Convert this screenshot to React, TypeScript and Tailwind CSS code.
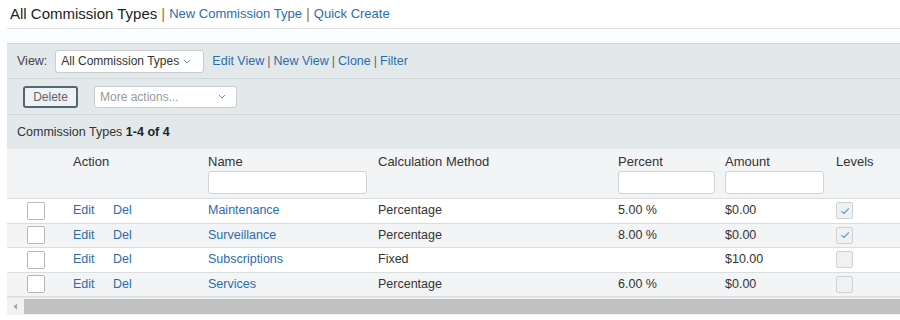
import React from "react";

const Chevron = () => (
  <svg width="8" height="5" viewBox="0 0 8 5" className="shrink-0">
    <path d="M1 1 L4 4 L7 1" fill="none" stroke="#8a8a8a" strokeWidth="1" />
  </svg>
);

const Check = () => (
  <svg width="10" height="8" viewBox="0 0 10 8">
    <path d="M1.5 4.2 L4 6.5 L8.8 1.5" fill="none" stroke="#5b9bd5" strokeWidth="1.1" />
  </svg>
);

type Row = { name: string; method: string; percent: string; amount: string; levels: boolean; shaded: boolean };

const rows: Row[] = [
  { name: "Maintenance", method: "Percentage", percent: "5.00 %", amount: "$0.00", levels: true, shaded: false },
  { name: "Surveillance", method: "Percentage", percent: "8.00 %", amount: "$0.00", levels: true, shaded: true },
  { name: "Subscriptions", method: "Fixed", percent: "", amount: "$10.00", levels: false, shaded: false },
  { name: "Services", method: "Percentage", percent: "6.00 %", amount: "$0.00", levels: false, shaded: true },
];

const cols = "grid grid-cols-[66px_135px_170px_240px_107px_111px_1fr]";

export default function App() {
  return (
    <div className="w-[900px] h-[320px] bg-white overflow-hidden text-[12.5px] text-[#333]" style={{ fontFamily: '"Liberation Sans", Arial, sans-serif' }}>
      {/* Title */}
      <div className="h-[29px] ml-[7px] border-b border-[#dcdedf] flex items-center pb-[2px] text-[15px] leading-none">
        <span className="ml-[3px] text-[#222]">All Commission Types</span>
        <span className="mx-[4px] text-[#a07a2c]">|</span>
        <span className="text-[#2a6cb0] text-[13px]">New Commission Type</span>
        <span className="mx-[4px] text-[#a07a2c]">|</span>
        <span className="text-[#2a6cb0] text-[13px]">Quick Create</span>
      </div>
      <div className="h-[14px] bg-[#fbfdfe]" />

      {/* Panel */}
      <div className="ml-[7px] bg-[#e3e9eb] border-t border-[#d2d8da]">
        {/* View row */}
        <div className="h-[35px] border-b border-[#d0d6d8] flex items-center pl-[10px]">
          <span className="text-[#444]">View:</span>
          <div className="ml-[8px] w-[149px] h-[23px] bg-white border border-[#c9cdcf] rounded-[3px] flex items-center justify-between pl-[5px] pr-[12px]">
            <span className="text-[12px] text-[#333]">All Commission Types</span>
            <Chevron />
          </div>
          <div className="ml-[8px] flex items-center text-[#2a6cb0]">
            <span>Edit View</span>
            <span className="mx-[3px] text-[#666]">|</span>
            <span>New View</span>
            <span className="mx-[3px] text-[#666]">|</span>
            <span>Clone</span>
            <span className="mx-[3px] text-[#666]">|</span>
            <span>Filter</span>
          </div>
        </div>

        {/* Actions row */}
        <div className="h-[36px] border-b border-[#d0d6d8] flex items-center pl-[16px]">
          <div className="w-[55px] h-[22px] border-2 border-[#4f6873] rounded-[3px] bg-[#eef2f3] flex items-center justify-center text-[12px] text-[#666]">
            Delete
          </div>
          <div className="ml-[16px] w-[143px] h-[22px] bg-white border border-[#c9cdcf] rounded-[3px] flex items-center justify-between pl-[5px] pr-[10px]">
            <span className="text-[12px] text-[#999]">More actions...</span>
            <Chevron />
          </div>
        </div>

        {/* Count row */}
        <div className="h-[34px] flex items-center pl-[10px] text-[#333]">
          Commission Types&nbsp;<span className="text-[#222]" style={{ fontWeight: 600 }}>1-4 of 4</span>
        </div>

        {/* Table header */}
        <div className={`${cols} h-[50px] bg-[#f2f4f5] border-b border-[#d8dcdd] text-[13px]`}>
          <div />
          <div className="pt-[5px] leading-[15px] text-[#333]">Action</div>
          <div className="pt-[5px] flex flex-col gap-[2px]">
            <span className="leading-[15px]">Name</span>
            <div className="w-[159px] h-[23px] bg-white border border-[#cfd3d5] rounded-[3px]" />
          </div>
          <div className="pt-[5px] leading-[15px]">Calculation Method</div>
          <div className="pt-[5px] flex flex-col gap-[2px]">
            <span className="leading-[15px]">Percent</span>
            <div className="w-[97px] h-[23px] bg-white border border-[#cfd3d5] rounded-[3px]" />
          </div>
          <div className="pt-[5px] flex flex-col gap-[2px]">
            <span className="leading-[15px]">Amount</span>
            <div className="w-[99px] h-[23px] bg-white border border-[#cfd3d5] rounded-[3px]" />
          </div>
          <div className="pt-[5px] leading-[15px]">Levels</div>
        </div>

        {/* Rows */}
        {rows.map((r) => (
          <div
            key={r.name}
            className={`${cols} h-[24.5px] items-center border-b border-[#dadedf] ${r.shaded ? "bg-[#f2f4f5]" : "bg-white"}`}
          >
            <div className="pl-[20px]">
              <div className="w-[18px] h-[18px] bg-white border border-[#b8b8b8] rounded-[2px]" />
            </div>
            <div className="flex text-[#2a6cb0]">
              <span className="w-[40px]">Edit</span>
              <span>Del</span>
            </div>
            <div className="text-[#2a6cb0]">{r.name}</div>
            <div>{r.method}</div>
            <div>{r.percent}</div>
            <div>{r.amount}</div>
            <div>
              <div className="w-[17px] h-[17px] bg-[#f0f1f2] border border-[#cfd2d4] rounded-[2px] flex items-center justify-center">
                {r.levels && <Check />}
              </div>
            </div>
          </div>
        ))}

        {/* Scrollbar */}
        <div className="h-[17px] flex bg-[#f1f1f1] mt-[1px]">
          <div className="w-[17px] flex items-center justify-center">
            <svg width="5" height="7" viewBox="0 0 5 7">
              <path d="M4 0.5 L0.5 3.5 L4 6.5 Z" fill="#a3a3a3" />
            </svg>
          </div>
          <div className="flex-1 my-[1px] bg-[#c1c1c1]" />
        </div>
      </div>
    </div>
  );
}
